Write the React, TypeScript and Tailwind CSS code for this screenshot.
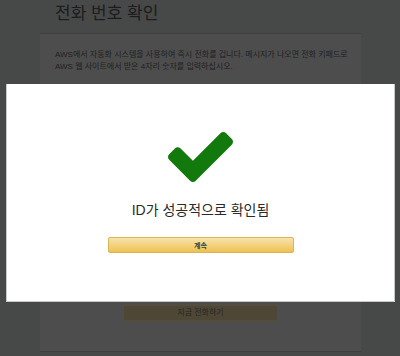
import React from 'react'

const font = { fontFamily: '"Liberation Sans", "Noto Sans CJK KR", sans-serif' }

function CheckIcon() {
  // old font-awesome style check mark
  return (
    <svg width="65" height="50" viewBox="121 334 1550 1188" aria-hidden="true">
      <path
        fill="#127a0c"
        d="M1671 566q0 40-28 68l-724 724-136 136q-28 28-68 28t-68-28l-136-136-362-362q-28-28-28-68t28-68l136-136q28-28 68-28t68 28l294 295 656-657q28-28 68-28t68 28l136 136q28 28 28 68z"
      />
    </svg>
  )
}

function App() {
  return (
    <div className="relative w-[400px] h-[356px] overflow-hidden bg-[#474948]" style={font}>
      {/* page behind the overlay */}
      <div className="pl-[55px] pt-[3px] h-[30px] text-[17px] leading-[22px] text-[#1c1c1c]">전화 번호 확인</div>
      <div className="ml-[40px] mt-[3px] w-[321px] h-[319px] bg-[#4d4d4d] border-t border-b border-[#3f3f3f] flex flex-col">
        <div className="pl-[15px] pt-[15px] text-[8px] leading-[12px] text-[#1f1f1f] whitespace-nowrap">
          <p>AWS에서 자동화 시스템을 사용하여 즉시 전화를 겁니다. 메시지가 나오면 전화 키패드로</p>
          <p>AWS 웹 사이트에서 받은 4자리 숫자를 입력하십시오.</p>
        </div>
        <div className="pl-[83px] pt-[11px] text-[8px] leading-[12px] text-[#1f1f1f]">전화 번호 제공</div>
        <div className="flex-1" />
        <div className="ml-[83px] mb-[30px] w-[155px] h-[16px] bg-[#4f4735] border border-[#574d33] rounded-[2px] flex items-center justify-center text-[8px] text-[#262626]">
          지금 전화하기
        </div>
      </div>

      {/* modal */}
      <div className="absolute left-[6px] top-[84px] w-[389px] h-[218px] bg-white border-l border-b border-r border-[#c9c9c9] flex flex-col items-center">
        <div className="mt-[48px]">
          <CheckIcon />
        </div>
        <div className="mt-[19px] text-[14px] leading-[18px] text-[#2a2a2a]">ID가 성공적으로 확인됨</div>
        <button className="mt-[18px] w-[186px] h-[16px] rounded-[2px] border border-[#d8b45a] bg-gradient-to-b from-[#f8e3a9] to-[#eec14f] flex items-center justify-center text-[7px] font-bold leading-none text-[#3a3a3a]">
          계속
        </button>
      </div>
    </div>
  )
}

export default App
